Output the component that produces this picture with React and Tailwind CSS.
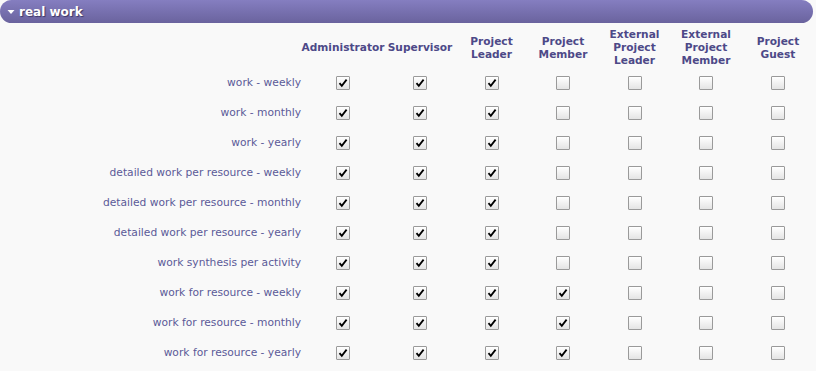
const roles = [
  ["Administrator"],
  ["Supervisor"],
  ["Project", "Leader"],
  ["Project", "Member"],
  ["External", "Project", "Leader"],
  ["External", "Project", "Member"],
  ["Project", "Guest"],
];

const reports = [
  ["work - weekly", 3],
  ["work - monthly", 3],
  ["work - yearly", 3],
  ["detailed work per resource - weekly", 3],
  ["detailed work per resource - monthly", 3],
  ["detailed work per resource - yearly", 3],
  ["work synthesis per activity", 3],
  ["work for resource - weekly", 4],
  ["work for resource - monthly", 4],
  ["work for resource - yearly", 4],
];

const cols = "grid grid-cols-[302px_82px_72px_71px_72px_71px_72px_72px]";

function Box({ checked }) {
  return (
    <span className="flex h-[14px] w-[14px] items-center justify-center rounded-[1px] border border-[#9a9a9a] bg-gradient-to-b from-[#ffffff] to-[#e4e4e4]">
      {checked && (
        <svg width="10" height="10" viewBox="0 0 10 10">
          <path d="M1.5 5.2 L3.8 7.8 L8.6 1.6" fill="none" stroke="#000" strokeWidth="1.8" />
        </svg>
      )}
    </span>
  );
}

export default function App() {
  return (
    <div className="h-[371px] w-[816px] bg-[#f9f9f9] font-['DejaVu_Sans',sans-serif]">
      <div className="flex h-[23px] w-[813px] items-center rounded-full bg-gradient-to-b from-[#857ec0] to-[#6a639e] pl-[7px]">
        <svg width="8" height="6" viewBox="0 0 8 6" className="mr-[4px]">
          <path d="M0.5 1 L7.5 1 L4 5 Z" fill="#fff" />
        </svg>
        <span className="text-[12px] font-bold text-white [text-shadow:1px_1px_1px_#3c3766]">real work</span>
      </div>

      <div className={`${cols} h-[44px] pt-[5px]`}>
        <div />
        {roles.map((lines, i) => (
          <div key={i} className="flex flex-col items-center justify-center whitespace-nowrap text-center text-[10.6px] font-bold leading-[13px] text-[#4d4988]">
            {lines.map((l) => (
              <span key={l}>{l}</span>
            ))}
          </div>
        ))}
      </div>

      {reports.map(([label, n]) => (
        <div key={label} className={`${cols} h-[30px] items-center pt-[1px]`}>
          <div className="mt-[2px] pr-[1px] text-right text-[10.7px] text-[#5b5a98]">{label}</div>
          {roles.map((_, i) => (
            <div key={i} className="flex justify-center">
              <Box checked={i < n} />
            </div>
          ))}
        </div>
      ))}
    </div>
  );
}
